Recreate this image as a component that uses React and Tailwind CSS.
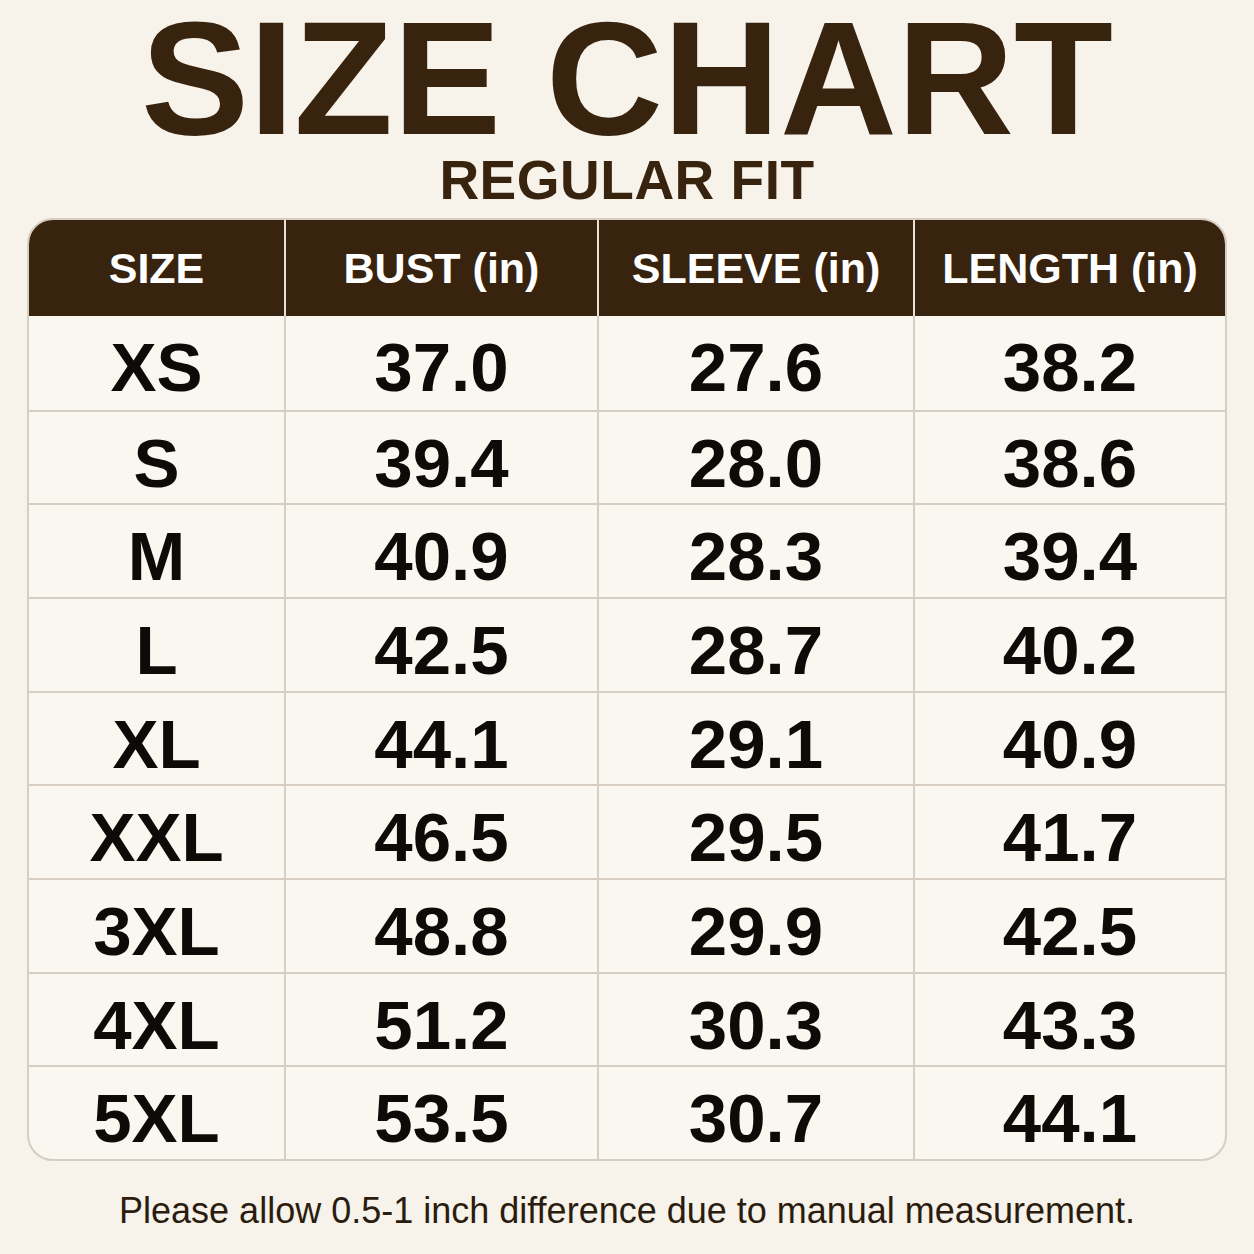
import React from 'react';

const rows = [
  ['XS', '37.0', '27.6', '38.2'],
  ['S', '39.4', '28.0', '38.6'],
  ['M', '40.9', '28.3', '39.4'],
  ['L', '42.5', '28.7', '40.2'],
  ['XL', '44.1', '29.1', '40.9'],
  ['XXL', '46.5', '29.5', '41.7'],
  ['3XL', '48.8', '29.9', '42.5'],
  ['4XL', '51.2', '30.3', '43.3'],
  ['5XL', '53.5', '30.7', '44.1'],
];

const headers = ['SIZE', 'BUST (in)', 'SLEEVE (in)', 'LENGTH (in)'];

const cols = 'grid grid-cols-[255px_313px_316px_1fr]';

const App = () => {
  return (
    <div className="w-[1254px] h-[1254px] bg-[#f7f2ea] font-['Liberation_Sans',Arial,sans-serif] flex flex-col items-center">
      {/* Titulo */}
      <h1 className="text-[162px] leading-[156px] font-bold text-[#38230f] tracking-[0px]">
        SIZE CHART
      </h1>
      <h2 className="text-[55px] leading-[48px] font-bold text-[#38230f] tracking-[0.5px]">
        REGULAR FIT
      </h2>

      {/* Tabla */}
      <div className="mt-[14px] w-[1200px] rounded-[26px] border-2 border-[#d6cec2] bg-[#faf6f0] overflow-hidden">
        <div className={`${cols} h-[96px] bg-[#38230f]`}>
          {headers.map((h, i) => (
            <div
              key={h}
              className={`flex items-center justify-center text-white text-[43px] font-bold ${i > 0 ? 'border-l-2 border-[#e9e0d3]' : ''}`}
            >
              {h}
            </div>
          ))}
        </div>
        <div className="grid grid-rows-9 h-[843px]">
          {rows.map((r, ri) => (
            <div key={r[0]} className={`${cols} ${ri > 0 ? 'border-t-2 border-[#d6cec2]' : ''}`}>
              {r.map((c, ci) => (
                <div
                  key={ci}
                  className={`flex items-center justify-center text-[69px] font-bold text-[#0d0a07] ${ci > 0 ? 'border-l-2 border-[#d6cec2]' : ''}`}
                >
                  {c}
                </div>
              ))}
            </div>
          ))}
        </div>
      </div>

      <p className="mt-[30px] text-[36px] leading-[40px] text-[#2a1c0e]">
        Please allow 0.5-1 inch difference due to manual measurement.
      </p>
    </div>
  );
};

export default App;
